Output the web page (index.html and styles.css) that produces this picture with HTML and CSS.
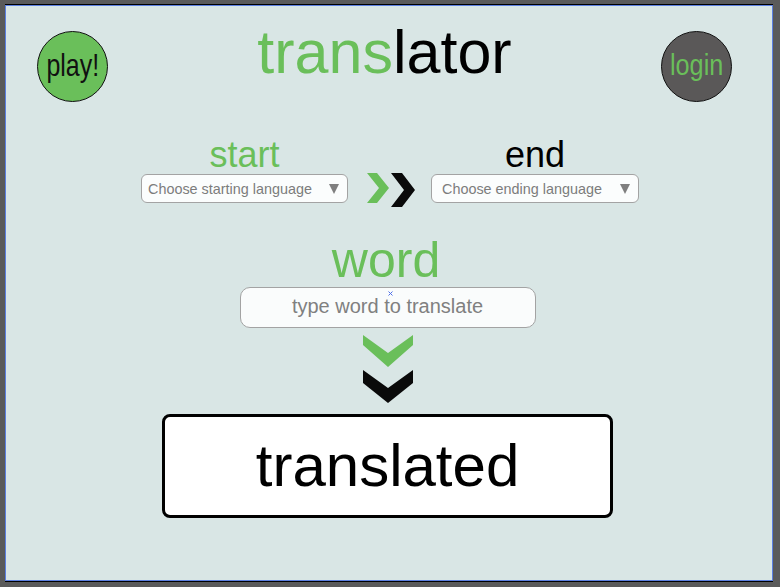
FILE: index.html
```html
<!DOCTYPE html>
<html lang="en">
<head>
<meta charset="utf-8">
<title>translator</title>
<link rel="stylesheet" href="styles.css">
</head>
<body>
<div class="board">
  <header class="header">
    <div class="circle circle--play"><span class="circle__text circle__text--play">play!</span></div>
    <h1 class="title"><span class="green">trans</span>lator</h1>
    <div class="circle circle--login"><span class="circle__text circle__text--login">login</span></div>
  </header>

  <section class="langs">
    <div class="lang">
      <div class="lang__label green">start</div>
      <div class="select select--start"><span class="select__text">Choose starting language</span><span class="caret"></span></div>
    </div>
    <svg class="arrows" width="48" height="34" viewBox="0 0 48 34">
      <polygon fill="#6abf5a" points="0,0 10,0 22,15 10,30 0,30 12,15"/>
      <polygon fill="#0a0a0a" points="24,0 35,0 48,17 35,34 24,34 37,17"/>
    </svg>
    <div class="lang lang--end">
      <div class="lang__label">end</div>
      <div class="select select--end"><span class="select__text">Choose ending language</span><span class="caret"></span></div>
    </div>
  </section>

  <section class="word">
    <div class="word__label green">word</div>
    <div class="word__field">
      <input class="word__input" type="text" placeholder="type word to translate">
      <svg class="word__mark" width="5" height="5" viewBox="0 0 5 5"><path d="M0.5 0.5L4.5 4.5M4.5 0.5L0.5 4.5" stroke="#4d6ee8" stroke-width="1"/></svg>
    </div>
    <svg class="downs" width="50" height="68" viewBox="0 0 50 68">
      <polygon fill="#6abf5a" points="0,0 25,18 50,0 50,10 25,32 0,10"/>
      <polygon fill="#0a0a0a" points="0,35 25,53 50,35 50,48 25,68 0,48"/>
    </svg>
    <div class="result">translated</div>
  </section>
</div>
</body>
</html>
```

FILE: styles.css
```css
html, body {
  margin: 0;
  padding: 0;
}
body {
  background: #5a5a5a;
  padding: 5px;
  font-family: "Liberation Sans", Arial, sans-serif;
  color: #000;
}
.board {
  width: 766px;
  height: 574px;
  border: 1px solid #5b7fe0;
  box-shadow: 0 -1px 0 #000, 0 1px 0 #000;
  background: #d9e6e5;
  display: flex;
  flex-direction: column;
}
.green { color: #6abf5a; }

.header {
  display: grid;
  grid-template-columns: 1fr auto 1fr;
  align-items: start;
  padding: 16px 40px 0 31px;
}
.title {
  margin: 0;
  font-size: 61px;
  line-height: 60px;
  font-weight: normal;
  color: #000;
}
.circle {
  width: 71px;
  height: 71px;
  box-sizing: border-box;
  border: 1.5px solid #111;
  border-radius: 50%;
  margin-top: 9px;
  display: flex;
  align-items: center;
  justify-content: center;
}
.circle--play {
  background: #6abf5a;
  justify-self: start;
  padding-bottom: 4px;
}
.circle--login {
  background: #5a5858;
  justify-self: end;
  padding-bottom: 2px;
}
.circle__text {
  display: inline-block;
  line-height: 1;
  white-space: nowrap;
}
.circle__text--play {
  font-size: 32px;
  color: #111;
  transform: scaleX(0.78);
}
.circle__text--login {
  font-size: 29px;
  color: #6abf5a;
  transform: scaleX(0.87);
}

.langs {
  display: flex;
  justify-content: center;
  align-items: flex-end;
  margin-top: 35px;
  padding-left: 2px;
}
.lang {
  width: 207px;
  display: flex;
  flex-direction: column;
  align-items: center;
}
.lang--end { width: 208px; }
.lang__label {
  font-size: 36px;
  line-height: 36px;
  margin-bottom: 1px;
}
.select {
  width: 100%;
  height: 29px;
  box-sizing: border-box;
  border: 1px solid #a3a3a3;
  border-radius: 6px;
  background: #fbfdfd;
  display: flex;
  align-items: center;
  font-size: 14.4px;
  color: #7c7c7c;
  white-space: nowrap;
}
.select--start { padding-left: 6px; }
.select--end { padding-left: 10px; }
.caret {
  margin-left: auto;
  margin-right: 8px;
  width: 0;
  height: 0;
  border-left: 5.5px solid transparent;
  border-right: 5.5px solid transparent;
  border-top: 10px solid #7f7f7f;
}
.arrows {
  display: block;
  margin: 0 16px -4px 19px;
}

.word {
  display: flex;
  flex-direction: column;
  align-items: center;
  margin-top: 32px;
  padding-right: 3px;
}
.word__label {
  font-size: 50px;
  line-height: 50px;
  margin-left: -3px;
}
.word__field {
  position: relative;
  margin-top: 2px;
}
.word__input {
  display: block;
  width: 296px;
  height: 41px;
  box-sizing: border-box;
  border: 1px solid #a3a3a3;
  border-radius: 10px;
  background: #fafcfc;
  font-family: "Liberation Sans", Arial, sans-serif;
  font-size: 20px;
  text-align: center;
  padding: 0 0 2px 0;
  outline: none;
  color: #333;
}
.word__input::placeholder {
  color: #808080;
  opacity: 1;
}
.word__mark {
  position: absolute;
  left: 148px;
  top: 4px;
}
.downs {
  display: block;
  margin-top: 7px;
}
.result {
  margin-top: 11px;
  width: 451px;
  height: 104px;
  box-sizing: border-box;
  border: 3px solid #000;
  border-radius: 8px;
  background: #fff;
  display: flex;
  align-items: center;
  justify-content: center;
  font-size: 60px;
  padding-bottom: 1px;
}
```
